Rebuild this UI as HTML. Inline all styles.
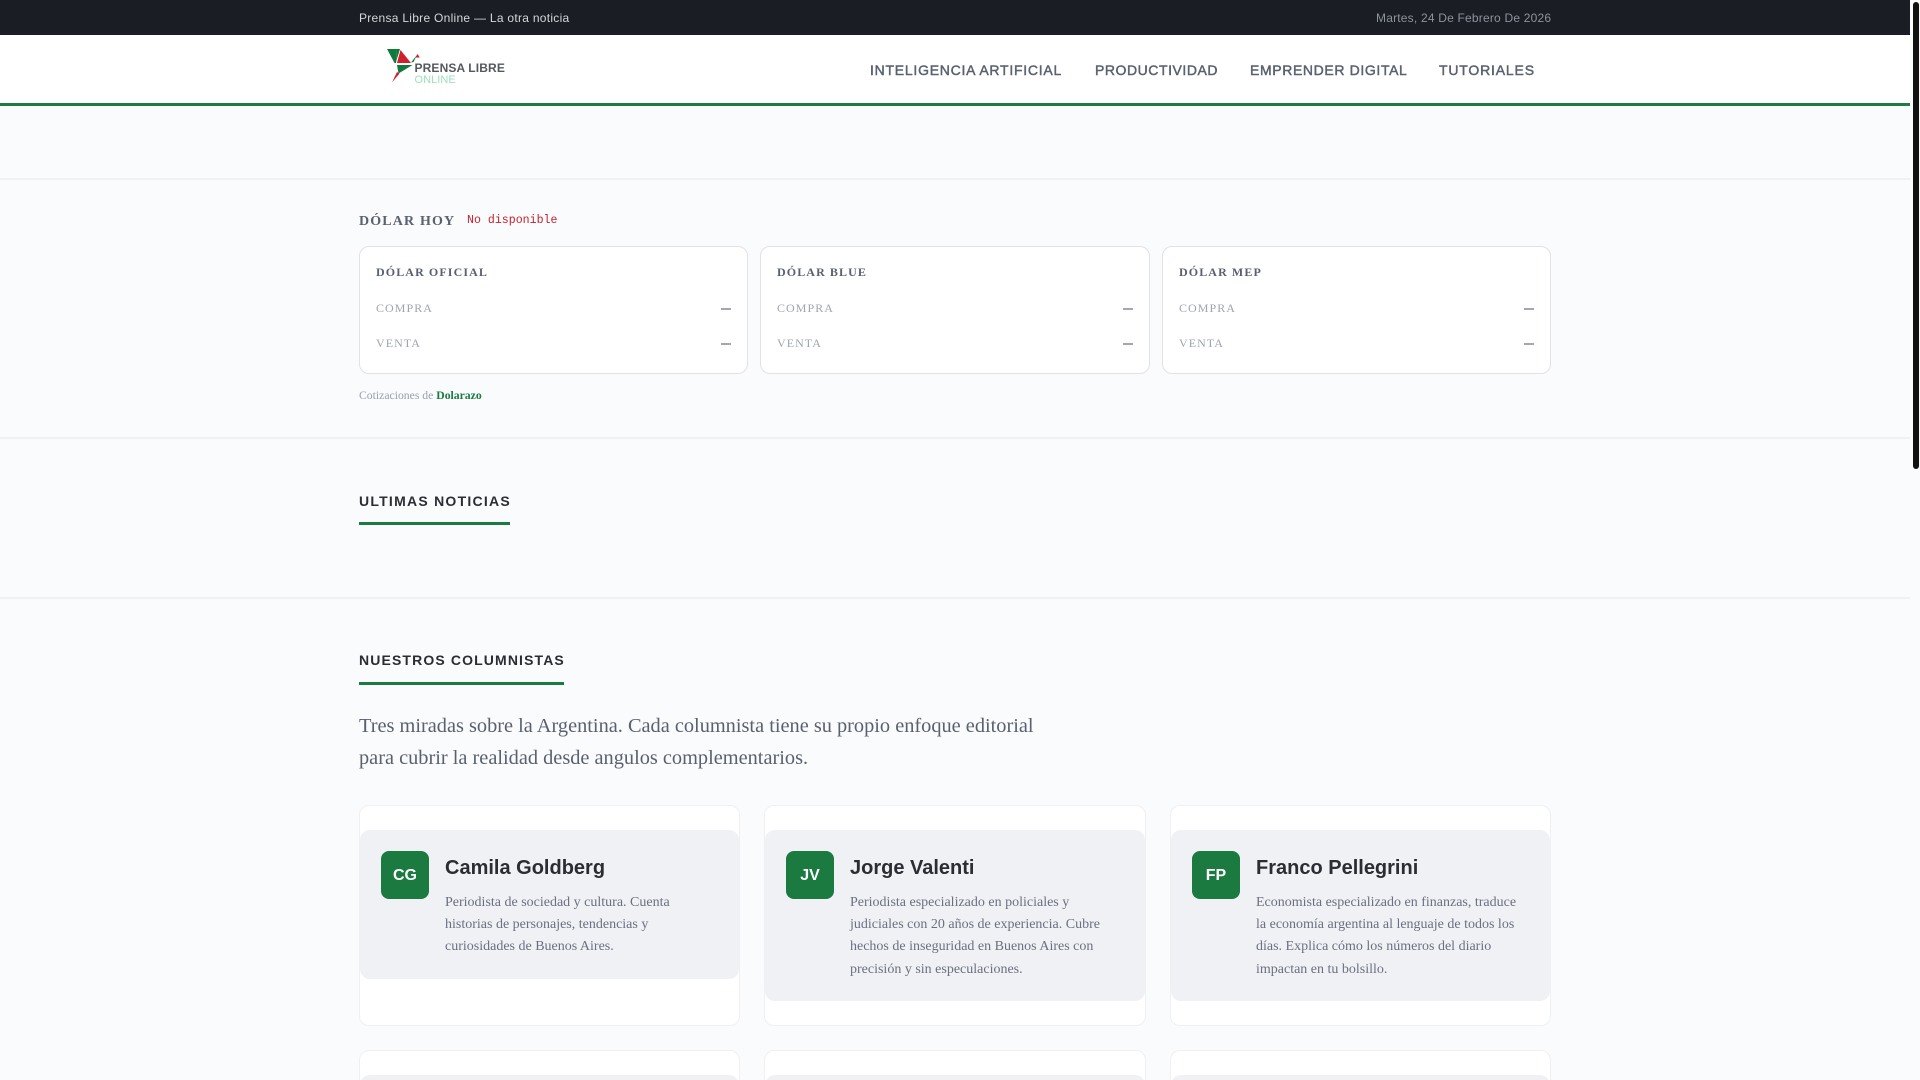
<!DOCTYPE html>
<html lang="es"><head><meta charset="utf-8"><title>Prensa Libre Online</title>
<style>
*{box-sizing:border-box;margin:0;padding:0}
html,body{width:1920px;height:1080px;overflow:hidden;background:#fafbfd}
body{position:relative;font-family:"Liberation Sans",sans-serif}
.a{position:absolute;white-space:nowrap}
.s{font-family:"Liberation Serif",serif}
.rule{position:absolute;left:0;width:1910px;height:2px;background:#f0f1f4}
.nav{top:62px;line-height:16px;font-size:14px;font-weight:400;color:#5a6070;-webkit-text-stroke:.45px #5a6070}
.dc{position:absolute;top:246px;height:128px;background:#fff;border:1px solid #dfe2e8;border-radius:10px}
.dt{top:265px;line-height:14px;font-family:"Liberation Serif",serif;font-size:12px;font-weight:700;letter-spacing:1.1px;color:#5a6070}
.dl{line-height:14px;font-family:"Liberation Serif",serif;font-size:12px;letter-spacing:1.05px;color:#a0a4b0}
.dash{position:absolute;width:10px;height:2px;background:#a4a7b2;font-size:0;overflow:hidden}
.h{font-size:14px;font-weight:700;letter-spacing:1.25px;color:#2b2d33;line-height:16px}
.bar{position:absolute;height:3px;background:#1a7a40;left:359px}
.cc{position:absolute;height:221px;background:#fff;border:1px solid #eef0f3;border-radius:10px}
.g{position:absolute;background:#f0f1f5;border-radius:10px}
.av{position:absolute;top:851px;width:48px;height:48px;background:#1a7a40;border-radius:8px;color:#fff;font-weight:700;font-size:16px;line-height:49px;text-align:center}
.n{top:856px;font-size:20px;font-weight:700;color:#2b2d33;line-height:24px}
.b{font-family:"Liberation Serif",serif;font-size:14px;color:#6b7080;line-height:22.4px}
#clip{position:absolute;left:0;top:0;width:1920px;height:1080px;overflow:hidden}
</style></head><body><div id="clip">
<div class="a" style="left:0;top:0;width:1910px;height:35px;background:#1a1d24"></div>
<div class="a" style="left:359px;top:11px;font-size:12px;line-height:14px;color:#d4d6da;letter-spacing:.28px">Prensa Libre Online — La otra noticia</div>
<div class="a" style="left:1376px;top:11px;font-size:12px;line-height:14px;color:#8e929b;letter-spacing:.2px">Martes, 24 De Febrero De 2026</div>
<div class="a" style="left:0;top:35px;width:1910px;height:71px;background:#fff;border-bottom:3px solid #1f7a43"></div>
<svg class="a" style="left:382px;top:44px" width="50" height="44" viewBox="382 44 50 44">
<polygon points="387,49 396.5,49 396,63 394.5,63" fill="#0f7a3c"/>
<polygon points="396.5,49 400,49 396,62" fill="#0f7a3c"/>
<polygon points="400.5,50 411,63 397,63" fill="#d01f2e"/>
<polygon points="411,62.5 417,55 413.5,62" fill="#0f7a3c"/>
<polygon points="417.5,54 419.8,57.5 415.5,57.5" fill="#d01f2e"/>
<polygon points="397,65 412.5,65 398.5,73.5" fill="#0f7a3c"/>
<polygon points="397,72 399.5,73.5 392,82.5" fill="#d01f2e"/>
</svg>
<div class="a" style="left:414.5px;top:62px;font-size:12px;font-weight:700;line-height:13px;color:#55585e;letter-spacing:.13px">PRENSA LIBRE</div>
<div class="a" style="left:414.5px;top:73.5px;font-size:11px;line-height:12px;color:#9ee2ba;letter-spacing:.05px">ONLINE</div>
<div class="a nav" style="left:870px;letter-spacing:.75px">INTELIGENCIA ARTIFICIAL</div>
<div class="a nav" style="left:1095px;letter-spacing:.55px">PRODUCTIVIDAD</div>
<div class="a nav" style="left:1250px;letter-spacing:.63px">EMPRENDER DIGITAL</div>
<div class="a nav" style="left:1439px;letter-spacing:.82px">TUTORIALES</div>
<div class="rule" style="top:178px"></div>
<div class="a s" style="left:359px;top:214px;font-size:14px;font-weight:700;line-height:16px;letter-spacing:1.15px;color:#5a6070">DÓLAR HOY</div>
<div class="a" style="left:467px;top:214px;font-family:'Liberation Mono',monospace;font-size:11.6px;line-height:14px;color:#c8202f">No disponible</div>
<div class="dc" style="left:359px;width:389px"></div>
<div class="dc" style="left:760px;width:390px"></div>
<div class="dc" style="left:1162px;width:389px"></div>
<div class="a dt" style="left:376px">DÓLAR OFICIAL</div>
<div class="a dl" style="left:376px;top:301px">COMPRA</div><div class="dash" style="left:721px;top:308px">—</div>
<div class="a dl" style="left:376px;top:336px">VENTA</div><div class="dash" style="left:721px;top:343px">—</div>
<div class="a dt" style="left:777px">DÓLAR BLUE</div>
<div class="a dl" style="left:777px;top:301px">COMPRA</div><div class="dash" style="left:1123px;top:308px">—</div>
<div class="a dl" style="left:777px;top:336px">VENTA</div><div class="dash" style="left:1123px;top:343px">—</div>
<div class="a dt" style="left:1179px">DÓLAR MEP</div>
<div class="a dl" style="left:1179px;top:301px">COMPRA</div><div class="dash" style="left:1524px;top:308px">—</div>
<div class="a dl" style="left:1179px;top:336px">VENTA</div><div class="dash" style="left:1524px;top:343px">—</div>
<div class="a s" style="left:359px;top:389px;font-size:11.7px;line-height:14px;color:#9a9fae">Cotizaciones de <b style="color:#1a7a40">Dolarazo</b></div>
<div class="rule" style="top:437px"></div>
<div class="a h" style="left:359px;top:493px">ULTIMAS NOTICIAS</div>
<div class="bar" style="top:522px;width:151px"></div>
<div class="rule" style="top:597px"></div>
<div class="a h" style="left:359px;top:652px;letter-spacing:1.13px">NUESTROS COLUMNISTAS</div>
<div class="bar" style="top:682px;width:205px"></div>
<div class="a s" style="left:359px;top:709.5px;font-size:20.35px;line-height:32.3px;color:#5a6070">Tres miradas sobre la Argentina. Cada columnista tiene su propio enfoque editorial<br>para cubrir la realidad desde angulos complementarios.</div>

<div class="cc" style="left:359px;top:805px;width:381px"></div>
<div class="cc" style="left:764px;top:805px;width:382px"></div>
<div class="cc" style="left:1170px;top:805px;width:381px"></div>
<div class="g" style="left:360px;top:830px;width:379px;height:149px"></div>
<div class="g" style="left:765px;top:830px;width:380px;height:171px"></div>
<div class="g" style="left:1171px;top:830px;width:379px;height:171px"></div>

<div class="av" style="left:381px">CG</div>
<div class="a n" style="left:445px">Camila Goldberg</div>
<div class="a b" style="left:445px;top:891.6px">Periodista de sociedad y cultura. Cuenta<br>historias de personajes, tendencias y<br>curiosidades de Buenos Aires.</div>

<div class="av" style="left:786px">JV</div>
<div class="a n" style="left:850px">Jorge Valenti</div>
<div class="a b" style="left:850px;top:891.6px">Periodista especializado en policiales y<br>judiciales con 20 años de experiencia. Cubre<br>hechos de inseguridad en Buenos Aires con<br>precisión y sin especulaciones.</div>

<div class="av" style="left:1192px">FP</div>
<div class="a n" style="left:1256px">Franco Pellegrini</div>
<div class="a b" style="left:1256px;top:891.6px">Economista especializado en finanzas, traduce<br>la economía argentina al lenguaje de todos los<br>días. Explica cómo los números del diario<br>impactan en tu bolsillo.</div>

<div class="cc" style="left:359px;top:1050px;width:381px"></div>
<div class="cc" style="left:764px;top:1050px;width:382px"></div>
<div class="cc" style="left:1170px;top:1050px;width:381px"></div>
<div class="g" style="left:360px;top:1075px;width:379px;height:40px"></div>
<div class="g" style="left:765px;top:1075px;width:380px;height:40px"></div>
<div class="g" style="left:1171px;top:1075px;width:379px;height:40px"></div>

<div class="a" style="left:1913px;top:2px;width:6px;height:467px;background:#111;border-radius:3px"></div>
</div></body></html>
